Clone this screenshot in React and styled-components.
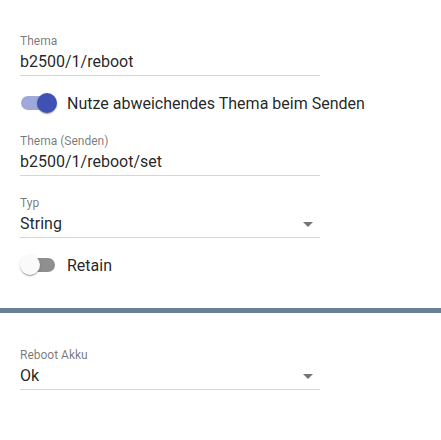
import React from "react";
import styled, { createGlobalStyle } from "styled-components";

const Global = createGlobalStyle`
  html, body { margin: 0; padding: 0; background: #fff; }
  body { font-family: Roboto, "Liberation Sans", Arial, sans-serif; }
`;

const Page = styled.div`
  width: 441px;
  height: 440px;
  background: #fff;
  display: flex;
  flex-direction: column;
`;

const Section = styled.div`
  display: flex;
  flex-direction: column;
  padding: ${(p) => p.$pad};
`;

const Field = styled.div`
  width: 300px;
  margin-left: 20px;
  margin-top: ${(p) => p.$mt || 0}px;
  display: flex;
  flex-direction: column;
`;

const Label = styled.div`
  font-size: 12px;
  line-height: 14px;
  color: rgba(0, 0, 0, 0.54);
`;

const Value = styled.div`
  position: relative;
  margin-top: 4px;
  font-size: 16px;
  line-height: 19px;
  color: rgba(0, 0, 0, 0.87);
  padding-bottom: 4px;
  border-bottom: 1px solid #d6d6d6;
`;

const Arrow = styled.svg`
  position: absolute;
  right: 7px;
  top: 5px;
  width: 10px;
  height: 10px;
`;

const SwitchRow = styled.label`
  height: 38px;
  margin-top: ${(p) => p.$mt || 0}px;
  margin-left: 20px;
  display: flex;
  align-items: center;
  gap: 10px;
  font-size: 16px;
  color: rgba(0, 0, 0, 0.87);
`;

const SwitchBox = styled.span`
  position: relative;
  width: 37px;
  height: 38px;
  flex: none;
`;

const Track = styled.span`
  position: absolute;
  left: 1px;
  top: 12px;
  width: 34px;
  height: 14px;
  border-radius: 7px;
  background: ${(p) => (p.$on ? "#9fa8da" : "#8f8f8f")};
`;

const Thumb = styled.span`
  position: absolute;
  top: 9px;
  left: ${(p) => (p.$on ? 17 : 0)}px;
  width: 20px;
  height: 20px;
  border-radius: 50%;
  background: ${(p) => (p.$on ? "#3f51b5" : "#fafafa")};
  box-shadow: 0 2px 1px -1px rgba(0, 0, 0, 0.2), 0 1px 1px 0 rgba(0, 0, 0, 0.14),
    0 1px 3px 0 rgba(0, 0, 0, 0.12);
`;

const Divider = styled.div`
  height: 5px;
  background: #687f96;
  margin-top: 24px;
`;

const Switch = ({ on, children, mt }) => (
  <SwitchRow $mt={mt}>
    <SwitchBox>
      <Track $on={on} />
      <Thumb $on={on} />
    </SwitchBox>
    {children}
  </SwitchRow>
);

const DropArrow = () => (
  <Arrow viewBox="7 7 10 10">
    <path d="M7 10l5 5 5-5z" fill="rgba(0,0,0,0.54)" />
  </Arrow>
);

const TextField = ({ label, value, select, mt }) => (
  <Field $mt={mt}>
    <Label>{label}</Label>
    <Value>
      {value}
      {select && <DropArrow />}
    </Value>
  </Field>
);

export default function App() {
  return (
    <Page>
      <Global />
      <Section $pad="34px 0 0 0">
        <TextField label="Thema" value="b2500/1/reboot" />
        <Switch on mt={8}>
          Nutze abweichendes Thema beim Senden
        </Switch>
        <TextField label="Thema (Senden)" value="b2500/1/reboot/set" mt={12} />
        <TextField label="Typ" value="String" select mt={20} />
        <Switch mt={8}>Retain</Switch>
      </Section>
      <Divider />
      <Section $pad="35px 0 0 0">
        <TextField label="Reboot Akku" value="Ok" select />
      </Section>
    </Page>
  );
}
